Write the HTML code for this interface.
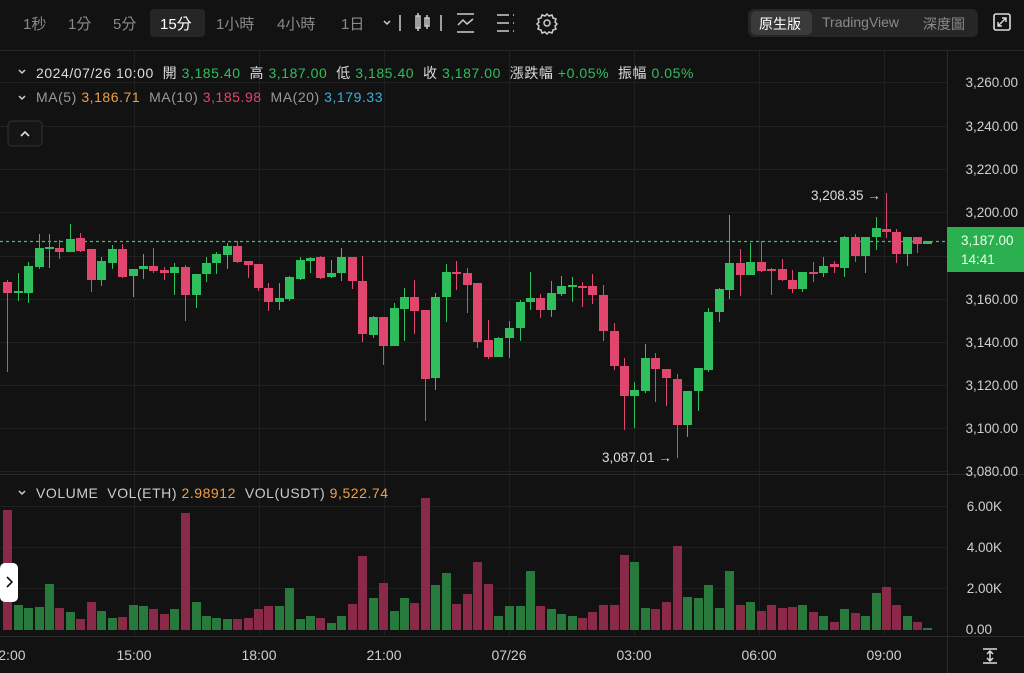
<!DOCTYPE html>
<html><head><meta charset="utf-8"><style>
body{margin:0;width:1024px;height:673px;background:#121212;overflow:hidden;font-family:"Liberation Sans","Noto Sans CJK TC",sans-serif;position:relative}
.t{position:absolute;white-space:nowrap}
</style></head><body>
<svg width="1024" height="673" style="position:absolute;left:0;top:0" font-family="Liberation Sans, Noto Sans CJK TC, sans-serif">
<rect width="1024" height="673" fill="#121212"/>
<line x1="0" y1="50.5" x2="1024" y2="50.5" stroke="#262626"/>
<g stroke="#202020" stroke-width="1">
<path d="M134.5 51V636M259.5 51V636M384.5 51V636M509.5 51V636M634.5 51V636M759.5 51V636M884.5 51V636"/>
<path d="M0 82.5H947M0 126.5H947M0 169.5H947M0 212.5H947M0 256.5H947M0 299.5H947M0 342.5H947M0 385.5H947M0 428.5H947M0 471.5H947"/>
<path d="M0 506.5H947M0 547.5H947M0 588.5H947"/>
</g>
<line x1="0" y1="474.5" x2="1024" y2="474.5" stroke="#2a2a2a"/>
<line x1="0" y1="636.5" x2="1024" y2="636.5" stroke="#2a2a2a"/>
<line x1="947.5" y1="51" x2="947.5" y2="673" stroke="#2a2a2a"/>
<g fill="#8a2a48">
<rect x="3" y="510" width="9" height="120"/><rect x="55" y="608" width="9" height="22"/><rect x="76" y="619" width="9" height="11"/><rect x="87" y="602" width="9" height="28"/><rect x="118" y="617" width="9" height="13"/><rect x="149" y="609" width="9" height="21"/><rect x="160" y="614" width="9" height="16"/><rect x="181" y="513" width="9" height="117"/><rect x="233" y="619" width="9" height="11"/><rect x="244" y="618" width="9" height="12"/><rect x="254" y="609" width="9" height="21"/><rect x="264" y="606" width="9" height="24"/><rect x="316" y="618" width="9" height="12"/><rect x="348" y="604" width="9" height="26"/><rect x="358" y="556" width="9" height="74"/><rect x="379" y="583" width="9" height="47"/><rect x="410" y="603" width="9" height="27"/><rect x="421" y="498" width="9" height="132"/><rect x="452" y="604" width="9" height="26"/><rect x="463" y="594" width="9" height="36"/><rect x="473" y="562" width="9" height="68"/><rect x="484" y="584" width="9" height="46"/><rect x="536" y="606" width="9" height="24"/><rect x="578" y="618" width="9" height="12"/><rect x="588" y="612" width="9" height="18"/><rect x="599" y="605" width="9" height="25"/><rect x="610" y="605" width="9" height="25"/><rect x="620" y="555" width="9" height="75"/><rect x="651" y="609" width="9" height="21"/><rect x="662" y="602" width="9" height="28"/><rect x="673" y="546" width="9" height="84"/><rect x="736" y="605" width="9" height="25"/><rect x="757" y="611" width="9" height="19"/><rect x="767" y="605" width="9" height="25"/><rect x="778" y="608" width="9" height="22"/><rect x="788" y="607" width="9" height="23"/><rect x="809" y="612" width="9" height="18"/><rect x="830" y="622" width="9" height="8"/><rect x="851" y="613" width="9" height="17"/><rect x="882" y="587" width="9" height="43"/><rect x="892" y="605" width="9" height="25"/><rect x="913" y="622" width="9" height="8"/>
</g>
<g fill="#28793c">
<rect x="14" y="605" width="9" height="25"/><rect x="24" y="608" width="9" height="22"/><rect x="35" y="607" width="9" height="23"/><rect x="45" y="584" width="9" height="46"/><rect x="66" y="612" width="9" height="18"/><rect x="97" y="611" width="9" height="19"/><rect x="108" y="618" width="9" height="12"/><rect x="129" y="605" width="9" height="25"/><rect x="139" y="606" width="9" height="24"/><rect x="170" y="609" width="9" height="21"/><rect x="192" y="602" width="9" height="28"/><rect x="202" y="616" width="9" height="14"/><rect x="212" y="618" width="9" height="12"/><rect x="223" y="619" width="9" height="11"/><rect x="275" y="606" width="9" height="24"/><rect x="285" y="588" width="9" height="42"/><rect x="296" y="619" width="9" height="11"/><rect x="306" y="616" width="9" height="14"/><rect x="327" y="623" width="9" height="7"/><rect x="337" y="616" width="9" height="14"/><rect x="369" y="598" width="9" height="32"/><rect x="390" y="611" width="9" height="19"/><rect x="400" y="598" width="9" height="32"/><rect x="431" y="585" width="9" height="45"/><rect x="442" y="573" width="9" height="57"/><rect x="494" y="616" width="9" height="14"/><rect x="505" y="606" width="9" height="24"/><rect x="516" y="606" width="9" height="24"/><rect x="526" y="571" width="9" height="59"/><rect x="547" y="609" width="9" height="21"/><rect x="557" y="614" width="9" height="16"/><rect x="568" y="616" width="9" height="14"/><rect x="630" y="562" width="9" height="68"/><rect x="641" y="608" width="9" height="22"/><rect x="683" y="597" width="9" height="33"/><rect x="694" y="598" width="9" height="32"/><rect x="704" y="585" width="9" height="45"/><rect x="715" y="608" width="9" height="22"/><rect x="725" y="571" width="9" height="59"/><rect x="746" y="602" width="9" height="28"/><rect x="798" y="605" width="9" height="25"/><rect x="819" y="616" width="9" height="14"/><rect x="840" y="609" width="9" height="21"/><rect x="861" y="616" width="9" height="14"/><rect x="872" y="593" width="9" height="37"/><rect x="903" y="616" width="9" height="14"/><rect x="923" y="628" width="9" height="2"/>
</g>
<line x1="0" y1="241.5" x2="947" y2="241.5" stroke="#34c862" stroke-width="1.3" stroke-dasharray="3 3"/>
<g stroke="#e0466e" stroke-width="1" fill="none">
<path d="M7.5 280V372M59.5 240V259M80.5 233V252M91.5 249V292M122.5 244V278M153.5 248V273M164.5 267V280M185.5 265V321M237.5 241V263M248.5 261V278M258.5 264V291M268.5 283V311M320.5 256V279M352.5 257V289M362.5 256V342M383.5 317V365M414.5 280V334M425.5 310V421M456.5 261V290M467.5 268V313M477.5 283V348M488.5 320V359M540.5 294V318M582.5 282V307M592.5 274V304M603.5 285V341M614.5 323V370M624.5 358V430M655.5 353V402M666.5 369V406M677.5 374V458M740.5 249V296M761.5 241V272M771.5 268V295M782.5 259V281M792.5 270V293M813.5 262V282M834.5 261V273M855.5 234V262M886.5 193V238M896.5 229V263M917.5 237V253"/>
</g>
<g fill="#e0466e">
<rect x="3" y="282" width="9" height="11"/><rect x="55" y="248" width="9" height="4"/><rect x="76" y="238" width="9" height="13"/><rect x="87" y="249" width="9" height="31"/><rect x="118" y="249" width="9" height="28"/><rect x="149" y="266" width="9" height="5"/><rect x="160" y="270" width="9" height="3"/><rect x="181" y="267" width="9" height="28"/><rect x="233" y="246" width="9" height="16"/><rect x="244" y="261" width="9" height="4"/><rect x="254" y="264" width="9" height="24"/><rect x="264" y="288" width="9" height="14"/><rect x="316" y="257" width="9" height="21"/><rect x="348" y="257" width="9" height="24"/><rect x="358" y="281" width="9" height="53"/><rect x="379" y="317" width="9" height="29"/><rect x="410" y="297" width="9" height="14"/><rect x="421" y="310" width="9" height="69"/><rect x="452" y="272" width="9" height="2"/><rect x="463" y="273" width="9" height="12"/><rect x="473" y="283" width="9" height="59"/><rect x="484" y="340" width="9" height="17"/><rect x="536" y="298" width="9" height="12"/><rect x="578" y="286" width="9" height="2"/><rect x="588" y="286" width="9" height="9"/><rect x="599" y="295" width="9" height="36"/><rect x="610" y="331" width="9" height="35"/><rect x="620" y="366" width="9" height="30"/><rect x="651" y="358" width="9" height="11"/><rect x="662" y="369" width="9" height="9"/><rect x="673" y="379" width="9" height="46"/><rect x="736" y="263" width="9" height="12"/><rect x="757" y="262" width="9" height="9"/><rect x="767" y="269" width="9" height="2"/><rect x="778" y="269" width="9" height="11"/><rect x="788" y="280" width="9" height="9"/><rect x="809" y="272" width="9" height="2"/><rect x="830" y="264" width="9" height="3"/><rect x="851" y="237" width="9" height="19"/><rect x="882" y="229" width="9" height="3"/><rect x="892" y="232" width="9" height="22"/><rect x="913" y="237" width="9" height="7"/>
</g>
<g stroke="#2fbf5c" stroke-width="1" fill="none">
<path d="M18.5 273V301M28.5 262V303M39.5 234V269M49.5 234V268M70.5 224V252M101.5 257V286M112.5 245V269M133.5 269V297M143.5 254V279M174.5 263V295M196.5 274V308M206.5 257V282M216.5 252V274M227.5 243V269M279.5 283V310M289.5 276V301M300.5 257V280M310.5 257V273M331.5 260V278M341.5 248V281M373.5 316V338M394.5 303V346M404.5 288V341M435.5 293V390M446.5 264V322M498.5 337V357M509.5 321V358M520.5 300V341M530.5 272V310M551.5 281V317M561.5 276V296M572.5 277V302M634.5 382V428M645.5 344V393M687.5 391V437M698.5 368V411M708.5 308V372M719.5 288V322M729.5 215V299M750.5 243V275M802.5 272V292M823.5 257V277M844.5 236V277M865.5 237V273M876.5 217V250M907.5 237V266"/>
</g>
<g fill="#2fbf5c">
<rect x="14" y="291" width="9" height="2"/><rect x="24" y="266" width="9" height="27"/><rect x="35" y="248" width="9" height="19"/><rect x="45" y="247" width="9" height="2"/><rect x="66" y="239" width="9" height="13"/><rect x="97" y="261" width="9" height="19"/><rect x="108" y="249" width="9" height="14"/><rect x="129" y="269" width="9" height="7"/><rect x="139" y="266" width="9" height="3"/><rect x="170" y="267" width="9" height="6"/><rect x="192" y="274" width="9" height="21"/><rect x="202" y="263" width="9" height="11"/><rect x="212" y="254" width="9" height="9"/><rect x="223" y="246" width="9" height="9"/><rect x="275" y="298" width="9" height="4"/><rect x="285" y="277" width="9" height="22"/><rect x="296" y="260" width="9" height="19"/><rect x="306" y="258" width="9" height="3"/><rect x="327" y="273" width="9" height="4"/><rect x="337" y="257" width="9" height="16"/><rect x="369" y="317" width="9" height="18"/><rect x="390" y="308" width="9" height="38"/><rect x="400" y="297" width="9" height="12"/><rect x="431" y="297" width="9" height="81"/><rect x="442" y="272" width="9" height="25"/><rect x="494" y="338" width="9" height="19"/><rect x="505" y="328" width="9" height="10"/><rect x="516" y="302" width="9" height="26"/><rect x="526" y="298" width="9" height="4"/><rect x="547" y="293" width="9" height="17"/><rect x="557" y="286" width="9" height="8"/><rect x="568" y="285" width="9" height="2"/><rect x="630" y="390" width="9" height="6"/><rect x="641" y="358" width="9" height="33"/><rect x="683" y="391" width="9" height="34"/><rect x="694" y="368" width="9" height="23"/><rect x="704" y="312" width="9" height="58"/><rect x="715" y="289" width="9" height="23"/><rect x="725" y="263" width="9" height="27"/><rect x="746" y="262" width="9" height="13"/><rect x="798" y="272" width="9" height="17"/><rect x="819" y="266" width="9" height="7"/><rect x="840" y="237" width="9" height="31"/><rect x="861" y="237" width="9" height="19"/><rect x="872" y="228" width="9" height="9"/><rect x="903" y="237" width="9" height="17"/><rect x="923" y="241" width="9" height="3"/>
</g>
<text x="811" y="200" fill="#ddd" font-size="13.5">3,208.35 →</text>
<text x="602" y="462" fill="#ddd" font-size="13.5">3,087.01 →</text>
<g fill="#cfcfcf" font-size="13.5" text-anchor="end">
<text x="1018" y="87">3,260.00</text><text x="1018" y="131">3,240.00</text><text x="1018" y="174">3,220.00</text><text x="1018" y="217">3,200.00</text><text x="1018" y="304">3,160.00</text><text x="1018" y="347">3,140.00</text><text x="1018" y="390">3,120.00</text><text x="1018" y="433">3,100.00</text><text x="1018" y="476">3,080.00</text>
<text x="1002" y="511">6.00K</text><text x="1002" y="552">4.00K</text><text x="1002" y="593">2.00K</text><text x="992" y="634">0.00</text>
</g>
<rect x="947" y="227" width="77" height="45" fill="#2ab04f"/>
<text x="961" y="245" fill="#e8ffe8" font-size="13.5">3,187.00</text>
<text x="961" y="264" fill="#e8ffe8" font-size="13.5">14:41</text>
<g fill="#cfcfcf" font-size="14" text-anchor="middle">
<text x="8" y="660">12:00</text><text x="134" y="660">15:00</text><text x="259" y="660">18:00</text><text x="384" y="660">21:00</text><text x="509" y="660">07/26</text><text x="634" y="660">03:00</text><text x="759" y="660">06:00</text><text x="884" y="660">09:00</text>
</g>
<g stroke="#ddd" stroke-width="1.5" fill="none"><path d="M983 649h14M983 663h14M990 651V661M987 654l3-3 3 3M987 658l3 3 3-3"/></g>
<rect x="0" y="563" width="18" height="39" rx="5" fill="#fff"/>
<path d="M7 577l5 5-5 5" stroke="#111" stroke-width="1.6" fill="none"/>
<g stroke="#ccc" stroke-width="1.5" fill="none">
<path d="M400 15V31"/>
<rect x="416" y="16" width="4" height="12"/><path d="M418 13V31"/><rect x="425" y="18" width="4" height="8"/><path d="M427 15V29"/>
<path d="M441 15V31"/>
<path d="M457 14H474M457 32H474M458 25l5-5 4 4 6-5"/>
<path d="M497 15H509M497 23H509M497 31H509M513 15h1M513 23h1M513 31h1"/>
<circle cx="547" cy="23" r="3"/>
<path d="M547 14l2 2 3-1 1 3 3 1-1 3 2 2-2 2 1 3-3 1-1 3-3-1-2 2-2-2-3 1-1-3-3-1 1-3-2-2 2-2-1-3 3-1 1-3 3 1z"/>
<path d="M384 21l3 3 3-3"/>
<path d="M19 70l3 3 3-3M19 96l3 3 3-3M19 491l3 3 3-3"/>
</g>
<rect x="8" y="121" width="34" height="25" rx="4" fill="#151515" stroke="#333"/>
<path d="M21 136l4-4 4 4" stroke="#ddd" stroke-width="1.6" fill="none"/>
<rect x="150" y="9" width="55" height="28" rx="4" fill="#262626"/>
<rect x="748" y="9" width="230" height="28" rx="6" fill="#262626"/>
<rect x="751" y="11" width="61" height="24" rx="5" fill="#3a3a3a"/>
<rect x="994" y="14" width="16" height="16" rx="2" stroke="#ddd" stroke-width="1.6" fill="none"/>
<path d="M998 26l8-8M1002 18h4v4M998 22v4h4" stroke="#ddd" stroke-width="1.4" fill="none"/>
</svg>
<div class="t" style="left:23px;top:13px;font-size:15px;color:#8a8a8a">1秒</div>
<div class="t" style="left:68px;top:13px;font-size:15px;color:#8a8a8a">1分</div>
<div class="t" style="left:113px;top:13px;font-size:15px;color:#8a8a8a">5分</div>
<div class="t" style="left:160px;top:13px;font-size:15px;color:#fff">15分</div>
<div class="t" style="left:216px;top:13px;font-size:15px;color:#8a8a8a">1小時</div>
<div class="t" style="left:277px;top:13px;font-size:15px;color:#8a8a8a">4小時</div>
<div class="t" style="left:341px;top:13px;font-size:15px;color:#8a8a8a">1日</div>
<div class="t" style="left:759px;top:14px;font-size:14px;color:#fff">原生版</div>
<div class="t" style="left:822px;top:14px;font-size:14px;color:#8a8a8a">TradingView</div>
<div class="t" style="left:923px;top:14px;font-size:14px;color:#8a8a8a">深度圖</div>
<div class="t" style="left:36px;top:63px;font-size:14px;letter-spacing:0.55px;color:#ddd">2024/07/26 10:00 &nbsp;開 <span style="color:#2fbf5c">3,185.40</span> &nbsp;高 <span style="color:#2fbf5c">3,187.00</span> &nbsp;低 <span style="color:#2fbf5c">3,185.40</span> &nbsp;收 <span style="color:#2fbf5c">3,187.00</span> &nbsp;漲跌幅 <span style="color:#2fbf5c">+0.05%</span> &nbsp;振幅 <span style="color:#2fbf5c">0.05%</span></div>
<div class="t" style="left:36px;top:89px;font-size:14px;letter-spacing:0.55px;color:#999">MA(5) <span style="color:#f0a040">3,186.71</span> &nbsp;MA(10) <span style="color:#e0466e">3,185.98</span> &nbsp;MA(20) <span style="color:#3ab0e0">3,179.33</span></div>
<div class="t" style="left:36px;top:485px;font-size:14px;letter-spacing:0.55px;color:#ccc">VOLUME &nbsp;VOL(ETH) <span style="color:#f0a040">2.98912</span> &nbsp;VOL(USDT) <span style="color:#f0a040">9,522.74</span></div>
</body></html>
